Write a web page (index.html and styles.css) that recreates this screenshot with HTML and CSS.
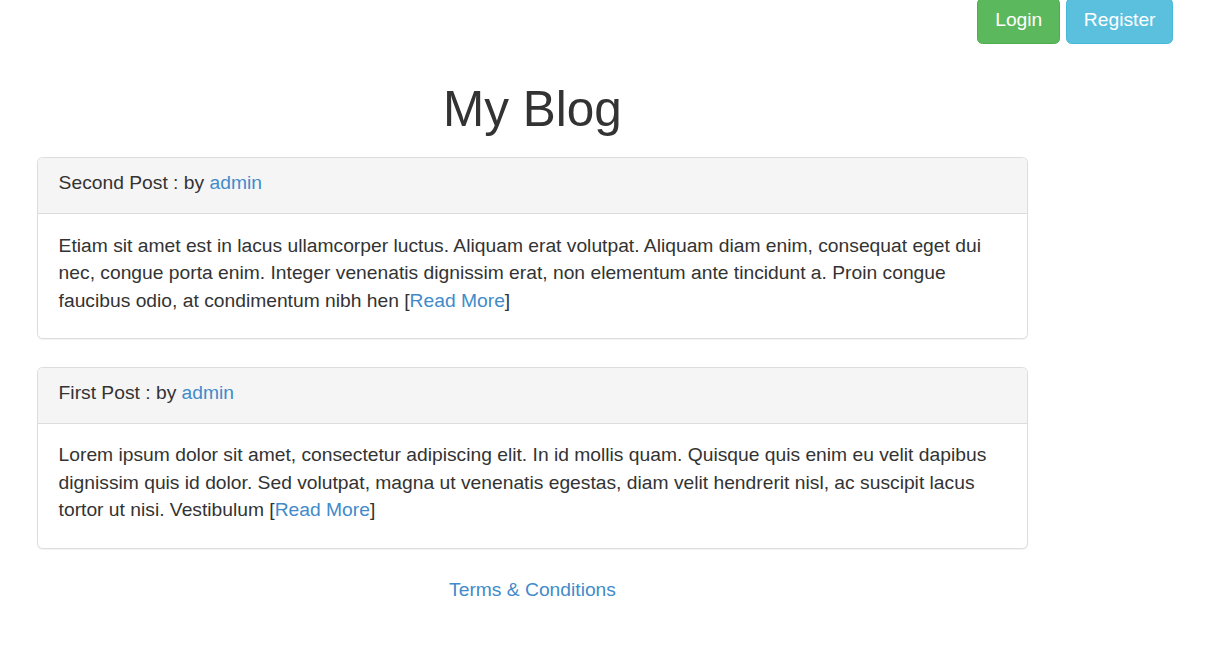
FILE: index.html
```html
<!DOCTYPE html>
<html>
<head>
<meta charset="utf-8">
<link rel="stylesheet" href="styles.css">
</head>
<body>
<div class="topbar">
  <a class="btn btn-success" href="#">Login</a>
  <a class="btn btn-info" href="#">Register</a>
</div>
<div class="main">
  <h1 class="title">My Blog</h1>
  <div class="panel">
    <div class="panel-heading">Second Post : by <a href="#">admin</a></div>
    <div class="panel-body">Etiam sit amet est in lacus ullamcorper luctus. Aliquam erat volutpat. Aliquam diam enim, consequat eget dui nec, congue porta enim. Integer venenatis dignissim erat, non elementum ante tincidunt a. Proin congue faucibus odio, at condimentum nibh hen [<a href="#">Read More</a>]</div>
  </div>
  <div class="panel">
    <div class="panel-heading">First Post : by <a href="#">admin</a></div>
    <div class="panel-body">Lorem ipsum dolor sit amet, consectetur adipiscing elit. In id mollis quam. Quisque quis enim eu velit dapibus dignissim quis id dolor. Sed volutpat, magna ut venenatis egestas, diam velit hendrerit nisl, ac suscipit lacus tortor ut nisi. Vestibulum [<a href="#">Read More</a>]</div>
  </div>
  <div class="footer"><a href="#">Terms &amp; Conditions</a></div>
</div>
</body>
</html>
```
FILE: styles.css
```css
html, body {
  margin: 0;
  padding: 0;
  background: #fff;
}
body {
  font-family: "Liberation Sans", Arial, sans-serif;
  font-size: 19.25px;
  line-height: 27.5px;
  color: #333;
}
a {
  color: #428bca;
  text-decoration: none;
}
.topbar {
  display: flex;
  justify-content: flex-end;
  gap: 6px;
  padding-right: 42px;
  margin-top: -2px;
}
.btn {
  display: inline-block;
  padding: 7px 17px 9px;
  font-size: 19.25px;
  line-height: 27.5px;
  border: 1px solid transparent;
  border-radius: 5.5px;
  color: #fff;
}
.btn-success {
  background: #5cb85c;
  border-color: #4cae4c;
}
.btn-info {
  background: #5bc0de;
  border-color: #46b8da;
  padding-left: 16.5px;
  padding-right: 16.5px;
}
.main {
  margin-left: 37px;
  width: 991px;
}
.title {
  margin: 38px 0 21px;
  font-size: 49.5px;
  font-weight: 500;
  line-height: 54.5px;
  text-align: center;
  color: #333;
}
.panel {
  border: 1px solid #ddd;
  border-radius: 5.5px;
  box-shadow: 0 1px 1px rgba(0,0,0,.05);
  margin-bottom: 27.5px;
  background: #fff;
}
.panel-heading {
  background: #f5f5f5;
  border-bottom: 1px solid #ddd;
  border-radius: 5px 5px 0 0;
  padding: 11px 20.6px 16.5px;
}
.panel-body {
  padding: 17.6px 20.6px 24px;
}
.footer {
  text-align: center;
  margin-top: 15px;
}
```
